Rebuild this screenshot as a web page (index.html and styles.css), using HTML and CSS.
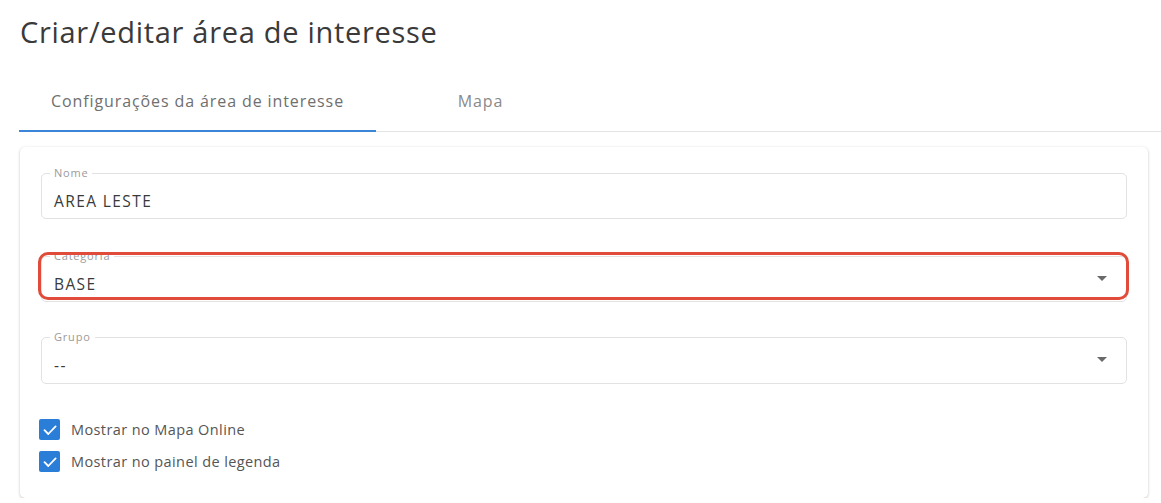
FILE: index.html
```html
<!DOCTYPE html>
<html lang="pt-BR">
<head>
<meta charset="utf-8">
<title>Criar/editar área de interesse</title>
<link rel="stylesheet" href="styles.css">
</head>
<body>
<div class="page">
  <h1 class="title">Criar/editar área de interesse</h1>
  <div class="tabs">
    <div class="tab tab-active">Configurações da área de interesse</div>
    <div class="tab tab-map">Mapa</div>
  </div>
  <div class="card">
    <div class="field">
      <span class="field-label">Nome</span>
      <span class="field-value">AREA LESTE</span>
    </div>
    <div class="field field-select">
      <span class="field-label">Categoria</span>
      <span class="field-value">BASE</span>
      <span class="arrow"></span>
      <span class="highlight"></span>
    </div>
    <div class="field field-select field-last">
      <span class="field-label">Grupo</span>
      <span class="field-value">--</span>
      <span class="arrow"></span>
    </div>
    <div class="checks">
      <label class="check">
        <span class="box"><svg viewBox="0 0 20 20" width="20" height="20"><path d="M4.5 10.2 L8.3 14 L15.6 6.4" fill="none" stroke="#fff" stroke-width="1.8" stroke-linecap="round" stroke-linejoin="round"/></svg></span>
        <span class="check-text">Mostrar no Mapa Online</span>
      </label>
      <label class="check">
        <span class="box"><svg viewBox="0 0 20 20" width="20" height="20"><path d="M4.5 10.2 L8.3 14 L15.6 6.4" fill="none" stroke="#fff" stroke-width="1.8" stroke-linecap="round" stroke-linejoin="round"/></svg></span>
        <span class="check-text">Mostrar no painel de legenda</span>
      </label>
    </div>
  </div>
</div>
</body>
</html>
```
FILE: styles.css
```css
* { box-sizing: border-box; }
html, body { margin: 0; padding: 0; background: #fff; }
body {
  font-family: "Open Sans", "Noto Sans", sans-serif;
  color: #333;
}
.page {
  padding: 0 13px 0 20px;
}
.title {
  margin: 0;
  padding-top: 13px;
  font-size: 29px;
  line-height: 38px;
  font-weight: 400;
  color: #3a3a3a;
  letter-spacing: 0.7px;
}
.tabs {
  display: flex;
  margin-top: 21px;
  margin-left: -1px;
  margin-right: -13px;
  border-bottom: 1px solid #e3e3e3;
}
.tab {
  height: 60px;
  display: flex;
  align-items: center;
  justify-content: center;
  font-size: 16px;
  letter-spacing: 0.9px;
  color: #777;
  border-bottom: 2px solid transparent;
  margin-bottom: -1px;
}
.tab-active {
  width: 357px;
  border-bottom-color: #3b86d8;
  color: #6f6f6f;
}
.tab-map {
  width: 209px;
  color: #8a8a8a;
}
.card {
  margin-top: 15px;
  border-radius: 5px;
  box-shadow: 0 1px 3px rgba(0,0,0,0.22), 0 0 1px rgba(0,0,0,0.08);
  padding: 26px 21px 25px 21px;
  height: 351px;
}
.field {
  position: relative;
  height: 46px;
  border: 1px solid #e2e2e2;
  border-radius: 5px;
  padding: 0 12px;
  display: flex;
  align-items: center;
  margin-bottom: 37px;
}
.field-last {
  margin-top: -2px;
  height: 47px;
  margin-bottom: 0;
}
.field-label {
  position: absolute;
  top: -8px;
  left: 8px;
  padding: 0 4px;
  background: #fff;
  font-size: 11px;
  letter-spacing: 0.8px;
  line-height: 14px;
  color: #9a9a9a;
}
.field-value {
  font-size: 15.5px;
  letter-spacing: 1.4px;
  color: #3a3a3a;
  padding-top: 9px;
}
.arrow {
  position: absolute;
  right: 19px;
  top: 19px;
  width: 0;
  height: 0;
  border-left: 5px solid transparent;
  border-right: 5px solid transparent;
  border-top: 5px solid #6a6a6a;
}
.highlight {
  position: absolute;
  top: -5px;
  left: -4px;
  right: -3px;
  bottom: 1px;
  border: 3px solid #e14b3a;
  border-radius: 10px;
  pointer-events: none;
}
.checks {
  margin-top: 35px;
  margin-left: -2px;
  display: flex;
  flex-direction: column;
  gap: 11px;
}
.check {
  display: flex;
  align-items: center;
  gap: 11px;
  height: 21px;
}
.box {
  width: 21px;
  height: 21px;
  border-radius: 2px;
  background: #2a7ed8;
  display: flex;
  align-items: center;
  justify-content: center;
}
.check-text {
  font-size: 14.5px;
  letter-spacing: 0.4px;
  color: #555;
}
```
